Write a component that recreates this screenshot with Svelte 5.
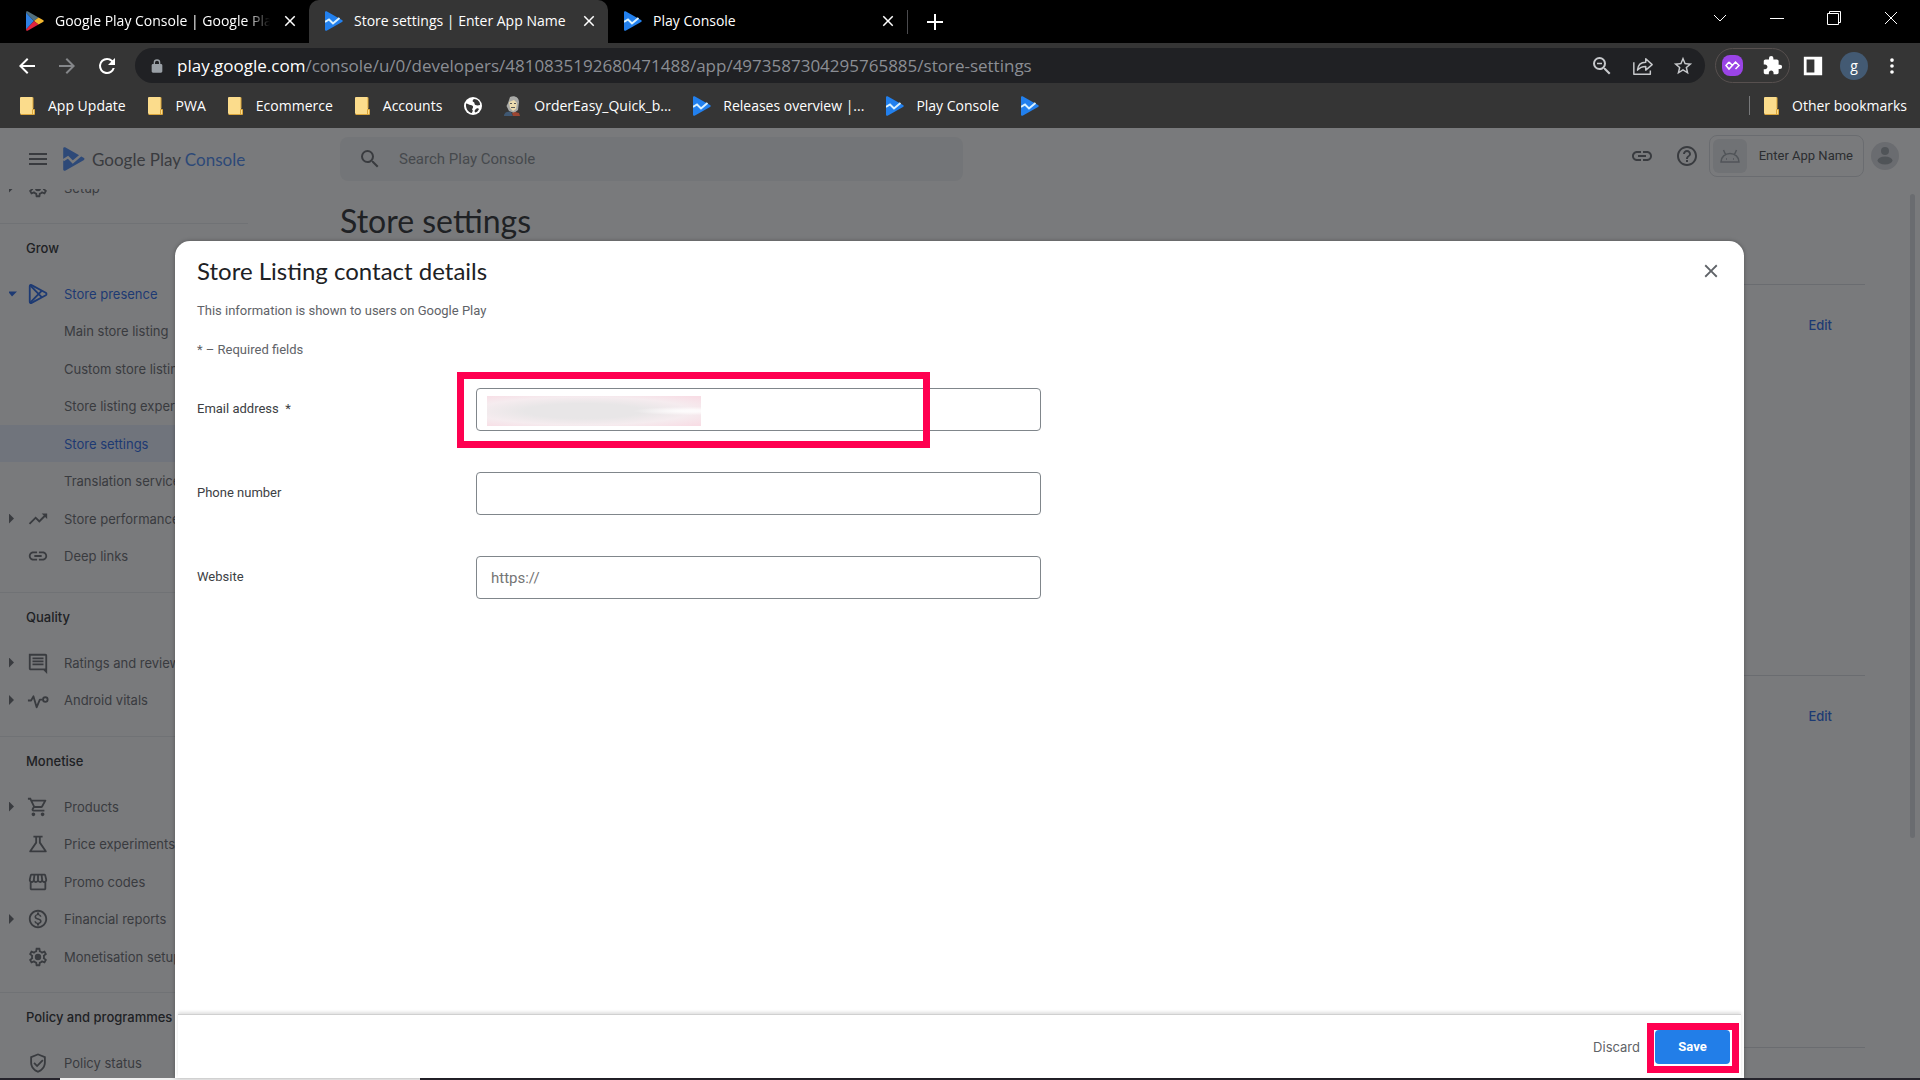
<script lang="ts">
  type NavItem = { label: string; icon?: string; arrow?: 'right' | 'down'; active?: boolean; open?: boolean };

  const tabs = [
    { title: 'Google Play Console | Google Play Console', icon: 'play', long: true },
    { title: 'Store settings | Enter App Name', icon: 'console', active: true },
    { title: 'Play Console', icon: 'console' }
  ];

  const bookmarks = [
    { label: 'App Update', icon: 'folder' },
    { label: 'PWA', icon: 'folder' },
    { label: 'Ecommerce', icon: 'folder' },
    { label: 'Accounts', icon: 'folder' },
    { label: '', icon: 'globe' },
    { label: 'OrderEasy_Quick_b...', icon: 'portrait' },
    { label: 'Releases overview |...', icon: 'console' },
    { label: 'Play Console', icon: 'console' },
    { label: '', icon: 'console' }
  ];

  const sections: { title?: string; items: NavItem[] }[] = [
    { items: [{ label: 'Setup', icon: 'gear', arrow: 'right' }] },
    {
      title: 'Grow',
      items: [
        { label: 'Store presence', icon: 'presence', arrow: 'down', open: true },
        { label: 'Main store listing' },
        { label: 'Custom store listings' },
        { label: 'Store listing experiments' },
        { label: 'Store settings', active: true },
        { label: 'Translation service' },
        { label: 'Store performance', icon: 'trend', arrow: 'right' },
        { label: 'Deep links', icon: 'link' }
      ]
    },
    {
      title: 'Quality',
      items: [
        { label: 'Ratings and reviews', icon: 'reviews', arrow: 'right' },
        { label: 'Android vitals', icon: 'vitals', arrow: 'right' }
      ]
    },
    {
      title: 'Monetise',
      items: [
        { label: 'Products', icon: 'cart', arrow: 'right' },
        { label: 'Price experiments', icon: 'flask' },
        { label: 'Promo codes', icon: 'shop' },
        { label: 'Financial reports', icon: 'dollar', arrow: 'right' },
        { label: 'Monetisation setup', icon: 'gear' }
      ]
    },
    {
      title: 'Policy and programmes',
      items: [{ label: 'Policy status', icon: 'shield' }]
    }
  ];

  /* Single-colour glyphs, all on a 24px grid */
  const glyphs: Record<string, string> = {
    menu: 'M3 18h18v-2H3v2zm0-5h18v-2H3v2zm0-7v2h18V6H3z',
    search: 'M15.5 14h-.79l-.28-.27A6.47 6.47 0 0 0 16 9.5 6.5 6.5 0 1 0 9.5 16c1.61 0 3.09-.59 4.23-1.57l.27.28v.79l5 4.99L20.49 19l-4.99-5zm-6 0C7.01 14 5 11.99 5 9.5S7.01 5 9.5 5 14 7.01 14 9.5 11.99 14 9.5 14z',
    zoomOut: 'M15.5 14h-.79l-.28-.27A6.47 6.47 0 0 0 16 9.5 6.5 6.5 0 1 0 9.5 16c1.61 0 3.09-.59 4.23-1.57l.27.28v.79l5 4.99L20.49 19l-4.99-5zm-6 0C7.01 14 5 11.99 5 9.5S7.01 5 9.5 5 14 7.01 14 9.5 11.99 14 9.5 14zM7 8.7h5v1.6H7z',
    link: 'M3.9 12c0-1.71 1.39-3.1 3.1-3.1h4V7H7c-2.76 0-5 2.24-5 5s2.24 5 5 5h4v-1.9H7c-1.71 0-3.1-1.39-3.1-3.1zM8 13h8v-2H8v2zm9-6h-4v1.9h4c1.71 0 3.1 1.39 3.1 3.1s-1.39 3.1-3.1 3.1h-4V17h4c2.76 0 5-2.24 5-5s-2.24-5-5-5z',
    help: 'M11 18h2v-2h-2v2zm1-16C6.48 2 2 6.48 2 12s4.48 10 10 10 10-4.48 10-10S17.52 2 12 2zm0 18c-4.41 0-8-3.59-8-8s3.59-8 8-8 8 3.59 8 8-3.59 8-8 8zm0-14c-2.21 0-4 1.79-4 4h2c0-1.1.9-2 2-2s2 .9 2 2c0 2-3 1.75-3 5h2c0-2.25 3-2.5 3-5 0-2.21-1.79-4-4-4z',
    gear: 'M19.43 12.98c.04-.32.07-.64.07-.98s-.03-.66-.07-.98l2.11-1.65c.19-.15.24-.42.12-.64l-2-3.46c-.12-.22-.39-.3-.61-.22l-2.49 1c-.52-.4-1.08-.73-1.69-.98l-.38-2.65A.49.49 0 0 0 14 2h-4c-.25 0-.46.18-.49.42l-.38 2.65c-.61.25-1.17.59-1.69.98l-2.49-1c-.23-.09-.49 0-.61.22l-2 3.46c-.13.22-.07.49.12.64l2.11 1.65c-.04.32-.07.65-.07.98s.03.66.07.98l-2.11 1.65c-.19.15-.24.42-.12.64l2 3.46c.12.22.39.3.61.22l2.49-1c.52.4 1.08.73 1.69.98l.38 2.65c.03.24.24.42.49.42h4c.25 0 .46-.18.49-.42l.38-2.65c.61-.25 1.17-.59 1.69-.98l2.49 1c.23.09.49 0 .61-.22l2-3.46c.12-.22.07-.49-.12-.64l-2.11-1.65zm-1.98-1.71c.04.31.05.52.05.73s-.02.43-.05.73l-.14 1.13.89.7 1.08.84-.7 1.21-1.27-.51-1.04-.42-.9.68c-.43.32-.84.56-1.25.73l-1.06.43-.16 1.13-.2 1.35h-1.4l-.19-1.35-.16-1.13-1.06-.43c-.43-.18-.83-.41-1.23-.71l-.91-.7-1.06.43-1.27.51-.7-1.21 1.08-.84.89-.7-.14-1.13c-.03-.31-.05-.54-.05-.74s.02-.43.05-.73l.14-1.13-.89-.7-1.08-.84.7-1.21 1.27.51 1.04.42.9-.68c.43-.32.84-.56 1.25-.73l1.06-.43.16-1.13.2-1.35h1.39l.19 1.35.16 1.13 1.06.43c.43.18.83.41 1.23.71l.91.7 1.06-.43 1.27-.51.7 1.21-1.07.85-.89.7.14 1.13zM12 8.5a3.5 3.5 0 1 0 0 7 3.5 3.5 0 0 0 0-7z',
    trend: 'M16 6l2.29 2.29-4.88 4.88-4-4L2 16.59 3.41 18l6-6 4 4 6.3-6.29L22 12V6z',
    reviews: 'M22 4c0-1.1-.9-2-2-2H2v16c0 1.1.9 2 2 2h14l4 4V4zM4 18V4h16v14H4zM6 12.5h12v2H6zm0-3.3h12v2H6zm0-3.3h12v2H6z',
    cart: 'M15.55 13c.75 0 1.41-.41 1.75-1.03l3.58-6.49A.996.996 0 0 0 20.01 4H5.21l-.94-2H1v2h2l3.6 7.59-1.35 2.44C4.52 15.37 5.48 17 7 17h12v-2H7l1.1-2h7.45zM6.16 6h12.15l-2.76 5H8.53L6.16 6zM7 18c-1.1 0-1.99.9-1.99 2S5.9 22 7 22s2-.9 2-2-.9-2-2-2zm10 0c-1.1 0-1.99.9-1.99 2s.89 2 1.99 2 2-.9 2-2-.9-2-2-2z',
    flask: 'M7 3v2h2v5.2L2.7 19.3C2.1 20.5 2.7 21 3.7 21h16.6c1 0 1.6-.5 1-1.7L15 10.2V5h2V3H7zm4 2h2v5.8L18.7 19H5.3L11 10.8V5z',
    shop: 'M21.9 8.89l-1.05-4.37c-.22-.9-1-1.52-1.91-1.52H5.05c-.9 0-1.69.63-1.9 1.52L2.1 8.89c-.24 1.02-.02 2.06.62 2.88.08.11.19.19.28.29V19c0 1.1.9 2 2 2h14c1.1 0 2-.9 2-2v-6.94c.09-.09.2-.18.28-.28.64-.82.87-1.87.62-2.89zM7.02 5l-.58 4.86c-.08.65-.6 1.14-1.21 1.14-.49 0-.8-.29-.93-.47-.27-.34-.36-.77-.26-1.17L5.05 5h1.97zm11.89 0l1.05 4.37c.1.42.01.84-.25 1.17-.14.18-.44.47-.94.47-.61 0-1.14-.49-1.21-1.14L16.98 5h1.93zm-3.4 4.52c.05.39-.07.78-.33 1.07-.23.26-.55.41-.96.41-.67 0-1.22-.59-1.22-1.31V5h1.96l.55 4.52zM11 9.69c0 .72-.55 1.31-1.29 1.31-.34 0-.65-.15-.89-.41-.25-.29-.37-.68-.33-1.07L9.04 5H11v4.69zM5 19v-6.03c.08.01.15.03.23.03.87 0 1.66-.36 2.24-.95.6.6 1.4.95 2.31.95.87 0 1.65-.36 2.23-.93.59.57 1.39.93 2.29.93.84 0 1.64-.35 2.24-.95.58.59 1.37.95 2.24.95.08 0 .15-.02.23-.03V19H5z',
    dollar: 'M12 2C6.48 2 2 6.48 2 12s4.48 10 10 10 10-4.48 10-10S17.52 2 12 2zm0 18c-4.41 0-8-3.59-8-8s3.59-8 8-8 8 3.59 8 8-3.59 8-8 8zm.31-8.86c-1.77-.45-2.34-.94-2.34-1.67 0-.84.79-1.43 2.1-1.43 1.38 0 1.9.66 1.94 1.64h1.71c-.05-1.34-.87-2.57-2.49-2.97V5H10.9v1.69c-1.51.32-2.72 1.3-2.72 2.81 0 1.79 1.49 2.69 3.66 3.21 1.95.46 2.34 1.15 2.34 1.87 0 .53-.39 1.39-2.1 1.39-1.6 0-2.23-.72-2.32-1.64H8.04c.1 1.7 1.36 2.66 2.86 2.97V19h2.34v-1.67c1.52-.29 2.72-1.16 2.73-2.77-.01-2.2-1.9-2.96-3.66-3.42z',
    shield: 'M12 1.5L3.5 5v6.5c0 5 3.6 9.7 8.5 11 4.9-1.3 8.5-6 8.5-11V5L12 1.5zm6.5 10c0 4-2.7 7.6-6.5 8.9-3.8-1.3-6.5-4.9-6.5-8.9V6.3L12 3.6l6.5 2.7v5.2zM8.4 11.2L7 12.6l4 4 7-7-1.4-1.4L11 13.8z',
    star: 'M22 9.24l-7.19-.62L12 2 9.19 8.63 2 9.24l5.46 4.73L5.82 21 12 17.27 18.18 21l-1.63-7.03L22 9.24zM12 15.4l-3.76 2.27 1-4.28-3.32-2.88 4.38-.38L12 6.1l1.71 4.04 4.38.38-3.32 2.88 1 4.28L12 15.4z',
    puzzle: 'M20.5 11H19V7c0-1.1-.9-2-2-2h-4V3.5a2.5 2.5 0 0 0-5 0V5H4c-1.1 0-1.99.9-1.99 2v3.8H3.5c1.49 0 2.7 1.21 2.7 2.7s-1.21 2.7-2.7 2.7H2V20c0 1.1.9 2 2 2h3.8v-1.5c0-1.49 1.21-2.7 2.7-2.7s2.7 1.21 2.7 2.7V22H17c1.1 0 2-.9 2-2v-4h1.5a2.5 2.5 0 0 0 0-5z',
    lock: 'M18 9h-1V7A5 5 0 0 0 7 7v2H6c-1.1 0-2 .9-2 2v9c0 1.1.9 2 2 2h12c1.1 0 2-.9 2-2v-9c0-1.1-.9-2-2-2zM9 7a3 3 0 0 1 6 0v2H9V7z',
    reload: 'M17.65 6.35A7.958 7.958 0 0 0 12 4a8 8 0 1 0 7.73 10h-2.08A6 6 0 1 1 12 6c1.66 0 3.14.69 4.22 1.78L13 11h7V4l-2.35 2.35z',
    back: 'M20 11H7.83l5.59-5.59L12 4l-8 8 8 8 1.41-1.41L7.83 13H20v-2z',
    forward: 'M12 4l-1.41 1.41L16.17 11H4v2h12.17l-5.58 5.59L12 20l8-8z',
    dots: 'M12 7.5a2 2 0 1 0 0-4 2 2 0 0 0 0 4zm0 6.5a2 2 0 1 0 0-4 2 2 0 0 0 0 4zm0 6.5a2 2 0 1 0 0-4 2 2 0 0 0 0 4z',
    panel: 'M2 2h20v20H2zM5 5v14h8.5V5z',
    close: 'M19 6.41L17.59 5 12 10.59 6.41 5 5 6.41 10.59 12 5 17.59 6.41 19 12 13.41 17.59 19 19 17.59 13.41 12z'
  };

  let email = $state('');
  let phone = $state('');
  let website = $state('');
</script>

{#snippet glyph(name: string, size = 22)}
  <svg width={size} height={size} viewBox="0 0 24 24" aria-hidden="true">
    {#if name === 'presence'}
      <g fill="none" stroke="currentColor" stroke-width="2" stroke-linejoin="round">
        <path d="M3 3.5c0-1.4 1-1.8 2-1.2l15.5 8.4c1 .6 1 2 0 2.600L5 21.700c-1 .6-2 .2-2-1.200z" />
        <path d="M3.5 2.5l12.500 13M3.500 21.500L16 8.500" />
      </g>
    {:else if name === 'vitals'}
      <g fill="none" stroke="currentColor" stroke-width="2" stroke-linejoin="round">
        <path d="M1 12.5h3.500L7 8l3.500 12L14 11.500h3" />
        <circle cx="20" cy="11.5" r="2.5" />
      </g>
    {:else if name === 'share'}
      <g fill="none" stroke="currentColor" stroke-width="1.6" stroke-linejoin="round">
        <path d="M2 8v13h18v-4" />
        <path d="M6 16.5c.5-5.500 4-8.500 9-8.500V4l7 6.500-7 6v-4c-4 0-6.500 1-9 4z" />
      </g>
    {:else}
      <path fill="currentColor" fill-rule="evenodd" d={glyphs[name]} />
    {/if}
  </svg>
{/snippet}

{#snippet badge(name: string)}
  {#if name === 'folder'}
    <svg width="16" height="18" viewBox="0 0 16 18" aria-hidden="true">
      <path fill="#fbdc8c" d="M1 0h11a1 1 0 0 1 1 1v11l2 1v4H1a1 1 0 0 1-1-1V1a1 1 0 0 1 1-1z" />
      <path fill="none" stroke="#dba63b" d="M.5 17.500h14v-5h-2v5M13 .5v11" />
    </svg>
  {:else if name === 'globe'}
    <svg width="18" height="18" viewBox="0 0 18 18" aria-hidden="true">
      <circle cx="9" cy="9" r="9" fill="#fff" />
      <path fill="#353535" d="M2 6.500c2 0 3 1.500 4.500 1.500S9.500 9 9 10.500s-1.500 1.500-.5 2.500-.5 1.500-.5 3C4 15.500 1.500 11.500 2 6.500zM10 2C8.500 3 8 4.500 9.500 5s.5 2.500 2 3 2.500.5 4.500 0C16.500 5 13.500 2 10 2zM11 13c1.500-2 3-2 4-1-.5 1.500-2 3-3.500 3.500-1-.5-1.200-1.500-.5-2.500z" />
    </svg>
  {:else if name === 'portrait'}
    <svg width="18" height="20" viewBox="0 0 18 20" aria-hidden="true">
      <path fill="#a9aaa7" d="M6 1c4-2 9 0 9 5l-1 8-4 3-5-2-2.500-5L4 7z" />
      <path fill="#ecdcae" d="M5 6l5-2 3 3-1 6-3 2-3-3z" />
      <path fill="#5a5a58" d="M6 7h2v1H6zM10 7h2v1h-2zM7 11h4v1H7z" />
      <path fill="#3f5873" d="M0 20c0-4 4-5 7-4l2 4z" />
      <path fill="#9d4632" d="M8 17l3-1 4 1 1 3H9z" />
    </svg>
  {:else if name === 'play'}
    <svg width="18" height="20" viewBox="0 0 18 20" aria-hidden="true">
      <path fill="#2f80e4" d="M0 1.500v17L8 10z" />
      <path fill="#52707f" d="M0 1.500C0 .3 1 0 2 .5l10.500 6L8 10z" />
      <path fill="#f3b72f" d="M12.500 6.500l4.500 2.500c1 .5 1 1.500 0 2l-4.500 2.500L8 10z" />
      <path fill="#e0243f" d="M0 18.500c0 1.200 1 1.500 2 1l10.500-6L8 10z" />
    </svg>
  {:else}
    <svg width="18" height="20" viewBox="0 0 18 20" aria-hidden="true">
      <path fill="#2280ee" d="M0 1.500C0 .3 1 0 2 .5L17 9c1 .5 1 1.500 0 2L2 19.500c-1 .5-2 .2-2-1z" />
      <path fill="none" stroke="#d9f1ff" stroke-width="2" d="M0 11l4-2.500 4 4L14.500 7" />
    </svg>
  {/if}
{/snippet}

<div class="window">
  <header class="browser">
    <div class="tabstrip">
      {#each tabs as tab}
        <div class="tab" class:tab--active={tab.active}>
          {@render badge(tab.icon)}
          <span class="tab-title" class:tab-title--long={tab.long}>{tab.title}</span>
          <button class="plain" aria-label="Close tab">{@render glyph('close', 18)}</button>
        </div>
      {/each}
      <span class="tab-divider"></span>
      <button class="plain new-tab" aria-label="New tab">
        <svg width="16" height="16" viewBox="0 0 16 16"><path stroke="currentColor" stroke-width="2" d="M8 0v16M0 8h16" /></svg>
      </button>
      <div class="window-controls">
        <button class="plain" aria-label="Search tabs"><svg width="14" height="14" viewBox="0 0 14 14"><path d="M1 4l6 6 6-6" /></svg></button>
        <button class="plain" aria-label="Minimise"><svg width="14" height="14" viewBox="0 0 14 14"><path d="M0 7.500h14" /></svg></button>
        <button class="plain" aria-label="Restore"><svg width="14" height="14" viewBox="0 0 14 14"><path d="M.5 2.500h11v11H.5zM2.500 2V.5h11v11H12" /></svg></button>
        <button class="plain" aria-label="Close"><svg width="14" height="14" viewBox="0 0 14 14"><path d="M1 1l12 12M13 1L1 13" /></svg></button>
      </div>
    </div>

    <div class="toolbar">
      <div class="nav-buttons">
        <button class="plain" aria-label="Back">{@render glyph('back', 24)}</button>
        <button class="plain dim" aria-label="Forward">{@render glyph('forward', 24)}</button>
        <button class="plain" aria-label="Reload">{@render glyph('reload', 24)}</button>
      </div>
      <div class="omnibox">
        <span class="lock">{@render glyph('lock', 16)}</span>
        <span class="url">play.google.com<span class="path">/console/u/0/developers/4810835192680471488/app/4973587304295765885/store-settings</span></span>
        <button class="plain" aria-label="Zoom">{@render glyph('zoomOut', 24)}</button>
        <button class="plain" aria-label="Share">{@render glyph('share', 22)}</button>
        <button class="plain" aria-label="Bookmark this page">{@render glyph('star', 22)}</button>
      </div>
      <div class="extensions">
        <button class="plain" aria-label="Extension">
          <svg width="21" height="21" viewBox="0 0 21 21">
            <rect width="21" height="21" rx="8" fill="#9a44e6" />
            <path fill="none" stroke="#fff" stroke-width="1.5" d="M7 7l-3 3.500L7 14l6.500-7 3.500 3.500-3.500 3.500M7 7l3.500 3.500" />
          </svg>
        </button>
        <button class="plain" aria-label="Extensions">{@render glyph('puzzle', 21)}</button>
      </div>
      <button class="plain" aria-label="Side panel">{@render glyph('panel', 22)}</button>
      <button class="plain profile" aria-label="Profile">g</button>
      <button class="plain" aria-label="Menu">{@render glyph('dots', 22)}</button>
    </div>

    <nav class="bookmarks" aria-label="Bookmarks">
      {#each bookmarks as mark}
        <a href="#bookmark" aria-label={mark.label || 'Bookmark'}>{@render badge(mark.icon)}{#if mark.label}<span>{mark.label}</span>{/if}</a>
      {/each}
      <a class="other" href="#other">{@render badge('folder')}<span>Other bookmarks</span></a>
    </nav>
  </header>

  <div class="viewport">
    <div class="topbar">
      <button class="plain menu" aria-label="Menu">{@render glyph('menu', 24)}</button>
      <a class="brand" href="#home">
        <svg width="22" height="24" viewBox="0 0 18 20" aria-hidden="true">
          <path fill="#4285f4" d="M0 1.500C0 .3 1 0 2 .5L17 9c1 .5 1 1.500 0 2L2 19.500c-1 .5-2 .2-2-1z" />
          <path fill="none" stroke="#fff" stroke-width="2" d="M0 11l4-2.500 4 4L14.500 7" />
        </svg>
        <span>Google Play <b>Console</b></span>
      </a>
      <label class="search">
        {@render glyph('search', 24)}
        <input type="search" placeholder="Search Play Console" aria-label="Search Play Console" />
      </label>
      <div class="account">
        <button class="plain" aria-label="Copy link">{@render glyph('link', 24)}</button>
        <button class="plain" aria-label="Help">{@render glyph('help', 24)}</button>
        <button class="app-chip">
          <span class="app-tile">
            <svg width="20" height="14" viewBox="0 0 20 14" aria-hidden="true">
              <path fill="none" stroke="#9aa0a6" stroke-width="1.5" d="M1 13c0-5 4-8.500 9-8.500s9 3.500 9 8.500zM5.500 5.500L3.500 1M14.500 5.500l2-4.500M6 10h1M13 10h1" />
            </svg>
          </span>
          <span class="app-name">Enter App Name</span>
        </button>
        <svg width="28" height="28" viewBox="0 0 28 28" aria-hidden="true">
          <circle cx="14" cy="14" r="14" fill="#dadce0" />
          <circle cx="14" cy="9" r="4" fill="#9aa0a6" />
          <ellipse cx="14" cy="18.5" rx="7.5" ry="4" fill="#9aa0a6" />
        </svg>
      </div>
    </div>

    <div class="body">
      <nav class="sidebar" aria-label="Console">
        {#each sections as section}
          <section>
            {#if section.title}<h2>{section.title}</h2>{/if}
            <ul>
              {#each section.items as item}
                <li>
                  <a href="#nav" class:active={item.active} class:open={item.open}>
                    <span class="arrow arrow--{item.arrow ?? 'none'}"></span>
                    <span class="nav-icon">{#if item.icon}{@render glyph(item.icon, 22)}{/if}</span>
                    <span>{item.label}</span>
                  </a>
                </li>
              {/each}
            </ul>
          </section>
        {/each}
      </nav>
      <main>
        <h1>Store settings</h1>
        <div class="card"><a href="#edit">Edit</a></div>
        <div class="card card--short"><a href="#edit">Edit</a></div>
        <div class="card"></div>
      </main>
      <div class="scroll-thumb"></div>
    </div>

    <div class="scrim">
      <form class="dialog" aria-labelledby="dialog-title" onsubmit={(e) => e.preventDefault()}>
        <div class="dialog-head">
          <h2 id="dialog-title">Store Listing contact details</h2>
          <button class="plain" type="button" aria-label="Close">{@render glyph('close', 22)}</button>
        </div>
        <div class="dialog-body">
          <p>This information is shown to users on Google Play</p>
          <p>* – Required fields</p>
          <div class="field">
            <label for="email">Email address &nbsp;*</label>
            <div class="control">
              <input id="email" type="email" bind:value={email} />
              <span class="redacted"></span>
              <span class="highlight highlight--field"></span>
            </div>
          </div>
          <div class="field">
            <label for="phone">Phone number</label>
            <div class="control"><input id="phone" type="tel" bind:value={phone} /></div>
          </div>
          <div class="field">
            <label for="website">Website</label>
            <div class="control"><input id="website" type="url" placeholder="https://" bind:value={website} /></div>
          </div>
        </div>
        <div class="dialog-foot">
          <button class="plain" type="button">Discard</button>
          <div class="control">
            <button class="save" type="submit">Save</button>
            <span class="highlight highlight--save"></span>
          </div>
        </div>
      </form>
    </div>
  </div>
  <div class="taskbar"><span></span></div>
</div>

<style>
  :global(body) {
    margin: 0;
    background: #000;
  }

  .window {
    display: flex;
    flex-direction: column;
    height: 100vh;
    overflow: hidden;
    font-family: Roboto, sans-serif;
    font-size: 13px;
    color: #5f6368;
  }
  .window *,
  .window {
    box-sizing: border-box;
  }
  .window :is(h1, h2, p, ul) {
    margin: 0;
    padding: 0;
    font-weight: 400;
  }
  .window a {
    color: inherit;
    text-decoration: none;
  }
  .window svg {
    display: block;
    flex: none;
  }
  .plain {
    display: flex;
    align-items: center;
    justify-content: center;
    padding: 0;
    border: 0;
    background: none;
    color: inherit;
    font: inherit;
  }

  /* ── Browser chrome ── */
  .browser {
    flex: none;
    background: #353535;
    color: #fff;
    font-family: "Segoe UI", "Open Sans", sans-serif;
    font-size: 14px;
  }
  .tabstrip {
    display: flex;
    align-items: center;
    height: 43px;
    padding-left: 10px;
    background: #000;
  }
  .tab {
    display: flex;
    align-items: center;
    width: 299px;
    height: 100%;
    padding: 0 10px 2px 16px;
    gap: 11px;
  }
  .tab--active {
    border-radius: 10px 10px 0 0;
    background: #353535;
  }
  .tab-title {
    flex: 1;
    white-space: nowrap;
  }
  .tab-title--long {
    overflow: hidden;
    mask-image: linear-gradient(to left, transparent, #000 24px);
  }
  .tab-divider {
    width: 1px;
    height: 24px;
    background: #4a4a4d;
  }
  .new-tab {
    margin-left: 19px;
  }
  .window-controls {
    display: flex;
    gap: 43px;
    align-self: flex-start;
    margin: 11px 22px 0 auto;
  }
  .window-controls path {
    fill: none;
    stroke: #fff;
  }

  .toolbar {
    display: flex;
    align-items: center;
    height: 45px;
    padding-right: 17px;
  }
  .nav-buttons {
    display: flex;
    gap: 16px;
    width: 135px;
    padding-left: 15px;
  }
  .dim {
    color: #85878a;
  }
  .omnibox {
    display: flex;
    align-items: center;
    flex: 1;
    gap: 18px;
    height: 35px;
    padding: 0 11px 0 14px;
    border-radius: 18px;
    background: #202124;
    color: #c7c9cc;
  }
  .lock {
    color: #9aa0a6;
  }
  .url {
    flex: 1;
    margin-left: -6px;
    overflow: hidden;
    white-space: nowrap;
    font-size: 17px;
    color: #fff;
  }
  .path {
    color: #8b8e94;
  }
  .extensions {
    display: flex;
    align-items: center;
    gap: 19px;
    height: 35px;
    margin: 0 12px 0 10px;
    padding: 0 6px;
    border: 1px solid #57504f;
    border-radius: 18px;
  }
  .profile {
    width: 28px;
    height: 28px;
    margin: 0 13px 0 16px;
    border-radius: 50%;
    background: #435a73;
  }

  .bookmarks {
    display: flex;
    align-items: center;
    gap: 22px;
    height: 40px;
    padding: 0 13px 5px 20px;
    white-space: nowrap;
  }
  .bookmarks a {
    display: flex;
    align-items: center;
    gap: 12px;
  }
  .bookmarks .other {
    margin-left: auto;
    padding-left: 14px;
    border-left: 1px solid #77787a;
  }

  /* ── Console page ── */
  .viewport {
    position: relative;
    display: flex;
    flex-direction: column;
    flex: 1;
    min-height: 0;
    padding-top: 1px;
    background: #fff;
  }
  .topbar {
    display: flex;
    align-items: center;
    flex: none;
    height: 60px;
    padding-right: 21px;
  }
  .menu {
    width: 63px;
    padding-left: 13px;
  }
  .brand {
    display: flex;
    align-items: center;
    gap: 7px;
    width: 277px;
    font-family: "Google Sans", Lato, sans-serif;
    font-size: 17px;
  }
  .brand b {
    font-weight: 400;
    color: #4285f4;
  }
  .search {
    display: flex;
    align-items: center;
    gap: 15px;
    width: 623px;
    height: 44px;
    padding-left: 18px;
    border-radius: 8px;
    background: #f1f3f4;
  }
  .search input {
    flex: 1;
    border: 0;
    outline: 0;
    background: none;
    font: 15px Roboto, sans-serif;
  }
  .search input::placeholder {
    color: #80868b;
    opacity: 1;
  }
  .account {
    display: flex;
    align-items: center;
    gap: 21px;
    margin-left: auto;
    padding-bottom: 6px;
  }
  .app-chip {
    display: flex;
    align-items: center;
    gap: 12px;
    height: 42px;
    margin: 0 -14px 0 -11px;
    padding: 0 10px 0 3px;
    border: 1px solid #dadce0;
    border-radius: 8px;
    background: none;
    color: #3c4043;
    font: 13px Roboto, sans-serif;
  }
  .app-name {
    padding-bottom: 2px;
  }
  .app-tile {
    display: grid;
    place-items: center;
    width: 34px;
    height: 34px;
    border-radius: 6px;
    background: #e8eaed;
  }

  .body {
    display: flex;
    flex: 1;
    min-height: 0;
  }
  .sidebar {
    flex: none;
    width: 248px;
    overflow: hidden;
    font-family: "Google Sans", Inter, sans-serif;
    font-size: 13px;
    font-weight: 500;
    white-space: nowrap;
  }
  .sidebar section {
    padding-bottom: 17px;
    border-bottom: 1px solid #e8eaed;
  }
  /* the menu is scrolled so that its first row is partly under the top bar */
  .sidebar section:first-child {
    margin-top: -20px;
  }
  .window .sidebar h2 {
    padding: 0 0 2px 26px;
    font-size: 13px;
    font-weight: 500;
    line-height: 49px;
    color: #202124;
  }
  .sidebar ul {
    list-style: none;
  }
  .sidebar a {
    display: flex;
    align-items: center;
    height: 37px;
    padding-left: 1px;
  }
  .sidebar li:nth-child(even) a {
    height: 38px;
  }
  .sidebar .active {
    background: #e8f0fe;
  }
  .window .sidebar .active,
  .window .sidebar .open {
    color: #1a5fe8;
  }
  .nav-icon {
    width: 37px;
  }
  .arrow {
    width: 26px;
    height: 10px;
    background: linear-gradient(currentColor, currentColor) 8px 0 / 8px 10px no-repeat;
    clip-path: polygon(8px 0, 13px 5px, 8px 10px);
  }
  .arrow--down {
    clip-path: polygon(7px 3px, 16px 3px, 11px 8px);
  }
  .arrow--none {
    background: none;
  }

  main {
    flex: 1;
    padding: 9px 45px 0 92px;
  }
  h1 {
    font-family: "Google Sans", Lato, sans-serif;
    font-size: 32px;
    line-height: 46px;
    color: #202124;
  }
  .card {
    height: 391px;
    padding: 32px 33px;
    border-top: 1px solid #dadce0;
    text-align: right;
    font-family: "Google Sans", Inter, sans-serif;
    font-weight: 500;
  }
  .window .card a {
    color: #1a5fe8;
  }
  h1 + .card {
    margin-top: 40px;
  }
  .card--short {
    height: 372px;
  }
  .scroll-thumb {
    width: 5px;
    height: 644px;
    margin: 5px 5px 0 0;
    border-radius: 3px;
    background: #dadce0;
  }

  /* ── Dialog ── */
  .scrim {
    position: absolute;
    inset: 0;
    display: flex;
    padding: 113px 176px 0 175px;
    background: rgba(32, 33, 36, 0.6);
  }
  .dialog {
    display: flex;
    flex-direction: column;
    flex: 1;
    border-radius: 15px 15px 0 0;
    background: #fff;
    box-shadow: 0 0 4px rgba(0, 0, 0, 0.3);
  }
  .dialog-head {
    display: flex;
    align-items: center;
    justify-content: space-between;
    height: 61px;
    padding: 0 22px 2px;
    font-family: "Google Sans", Lato, sans-serif;
  }
  .dialog-head h2 {
    font-size: 24px;
    color: #202124;
  }
  .dialog-body {
    flex: 1;
    padding: 0 22px;
  }
  .dialog-body p {
    height: 39px;
    line-height: 18px;
  }
  .field {
    display: flex;
    align-items: center;
    height: 43px;
    margin-bottom: 41px;
    color: #3c4043;
  }
  p + .field {
    margin-top: 8px;
  }
  .field label {
    width: 279px;
    padding-bottom: 2px;
  }
  .control {
    position: relative;
  }
  .control input {
    display: block;
    width: 565px;
    height: 43px;
    padding: 0 14px;
    border: 1px solid #80868b;
    border-radius: 4px;
    background: #fff;
    font: 15px Roboto, sans-serif;
  }
  .control input::placeholder {
    color: #757575;
  }
  .redacted {
    position: absolute;
    top: 8px;
    left: 11px;
    width: 214px;
    height: 30px;
    background:
      radial-gradient(ellipse at 95% 50%, rgba(255, 255, 255, 0.8) 5%, transparent 20%),
      radial-gradient(ellipse at 45% 50%, #e8e6e7 35%, rgba(244, 242, 243, 0.7) 65%, transparent 95%),
      #f8dde5;
  }
  .highlight {
    position: absolute;
    border: 7px solid #ff0050;
    pointer-events: none;
  }
  .highlight--field {
    top: -16px;
    left: -19px;
    width: 473px;
    height: 76px;
  }
  .highlight--save {
    inset: -7px -9px -9px -8px;
  }

  .dialog-foot {
    display: flex;
    align-items: center;
    justify-content: flex-end;
    gap: 15px;
    height: 64px;
    margin: 0 3px;
    padding: 0 11px 0 0;
    border-top: 1px solid #d0d0d0;
    box-shadow: 0 -2px 3px rgba(0, 0, 0, 0.12);
    font-family: "Google Sans", Inter, sans-serif;
  }
  .save {
    display: block;
    width: 75px;
    height: 34px;
    border: 0;
    border-radius: 4px;
    background: #227ee8;
    color: #fff;
    font: 700 13px "Google Sans", Roboto, sans-serif;
  }

  .taskbar {
    flex: none;
    height: 2px;
    padding-left: 60px;
    background: #26242c;
  }
  .taskbar span {
    display: block;
    width: 360px;
    height: 2px;
    background: #f0f0f0;
  }
</style>
